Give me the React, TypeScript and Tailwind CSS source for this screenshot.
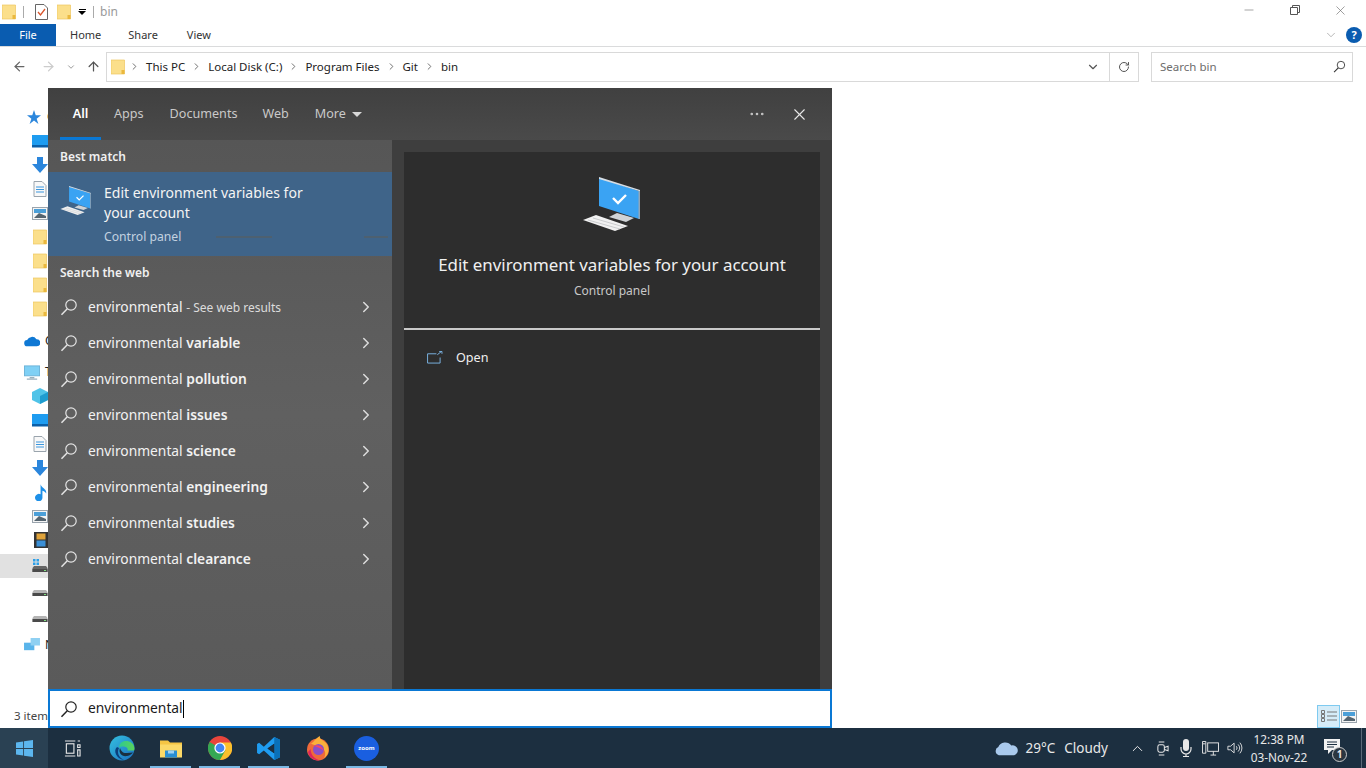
import React from 'react';
import { ChevronRight, ChevronDown, ChevronUp, ArrowLeft, ArrowRight, ArrowUp, RotateCw, X, Minus, Ellipsis } from 'lucide-react';

const FONT = "font-['Noto_Sans','Open_Sans',sans-serif]";

const SearchGlyph = ({ className }: { className?: string }) => (
  <svg viewBox="0 0 18 18" fill="none" stroke="currentColor" strokeWidth="1.2" className={className}>
    <circle cx="11" cy="7" r="5.2" />
    <path d="M7.3 10.8 L1.5 16.8" strokeWidth="1.5" />
  </svg>
);

const Folder = ({ className }: { className?: string }) => (
  <svg viewBox="0 0 14 16" className={className}>
    <path d="M0 1 H10 L13.5 1 V15 H0 Z" fill="#fbdf8b" stroke="#eec55f" strokeWidth="0.7" />
    <rect x="10.5" y="11" width="3" height="4" fill="#eab83e" />
  </svg>
);

const Desktop = ({ className }: { className?: string }) => (
  <svg viewBox="0 0 58 56" className={className}>
    <path d="M16 1 L56 14 L56 42 L16 29 Z" fill="#3aa3f3" />
    <path d="M16 0 L57 13 L57 16 L56 14 L16 2 Z" fill="#d6dde4" />
    <path d="M55.5 14 L57 14 V42 L55.5 42 Z" fill="#8fa5b8" />
    <path d="M30 21 L35 26 L43 18" fill="none" stroke="#fff" strokeWidth="2.4" />
    <path d="M26 40 L34 36 L51 41 L43 45 Z" fill="#cfd3d6" />
    <path d="M0 43 L13 38 L45 49 L32 54 Z" fill="#f1f1f1" />
    <path d="M5 43 L37 52 M10 41 L41 50" stroke="#b9bcbf" strokeWidth="0.7" />
  </svg>
);

// Windows logo on the taskbar
const StartLogo = () => (
  <svg viewBox="0 0 18 18" className="w-[17px] h-[17px]" fill="#5cb6ee">
    <path d="M0 2.6 L7.6 1.5 V8.5 H0 Z M8.5 1.4 L18 0 V8.5 H8.5 Z M0 9.5 H7.6 V16.5 L0 15.4 Z M8.5 9.5 H18 V18 L8.5 16.6 Z" />
  </svg>
);

const EdgeIcon = () => (
  <svg viewBox="0 0 26 26" className="w-[26px] h-[26px]">
    <defs>
      <linearGradient id="edgeA" x1="0" y1="0" x2="1" y2="1">
        <stop offset="0" stopColor="#35c1e0" />
        <stop offset="1" stopColor="#1a6fc0" />
      </linearGradient>
      <linearGradient id="edgeB" x1="0" y1="0" x2="1" y2="0">
        <stop offset="0" stopColor="#2fc98f" />
        <stop offset="1" stopColor="#5bd35a" />
      </linearGradient>
    </defs>
    <circle cx="13" cy="13" r="12.5" fill="url(#edgeA)" />
    <path d="M25.5 14 C25.5 8 20 5.5 16 6 C12 6.5 9.5 10 10.5 12.5 C12 10.5 20 11 18.5 15.5 L25 15.5 Z" fill="url(#edgeB)" />
    <path d="M8 12 C4 15 7 24 15 25 C9 22 8 17 10 13 Z" fill="#0c3f7d" />
    <path d="M11 13 C9 18 13 22 18 21 C21 20.4 23 19 24 17.5 L18 18 C14 18.5 12 16 11 13 Z" fill="#1a2f40" />
  </svg>
);

const FolderApp = () => (
  <svg viewBox="0 0 22 18" className="w-[22px] h-[19px]">
    <path d="M0 1 H8 L10 3 H22 V17 H0 Z" fill="#f5c544" />
    <rect x="0" y="5" width="22" height="13" fill="#fbd968" />
    <rect x="5" y="11" width="12" height="7" fill="#2a8fd4" />
    <rect x="8" y="11" width="6" height="3" fill="#9fd2f2" />
  </svg>
);

const ChromeIcon = () => (
  <svg viewBox="0 0 24 24" className="w-[24px] h-[24px]">
    <circle cx="12" cy="12" r="12" fill="#e8453c" />
    <path d="M12 12 L1.6 6 A12 12 0 0 0 12 24 L18 14 Z" fill="#34a853" />
    <path d="M12 6.5 H22.9 A12 12 0 0 1 12 24 L17.5 14 Z" fill="#fbc02d" />
    <circle cx="12" cy="12" r="5.6" fill="#fff" />
    <circle cx="12" cy="12" r="4.4" fill="#4285f4" />
  </svg>
);

const VsCodeIcon = () => (
  <svg viewBox="0 0 24 24" className="w-[25px] h-[25px]">
    <path d="M17.5 1 L23 3.5 V20.5 L17.5 23 L7.5 13.8 L3 17.5 L1 16.3 V7.7 L3 6.5 L7.5 10.2 Z M17.5 7.5 L11 12 L17.5 16.5 Z" fill="#1f9cf0" />
    <path d="M17.5 1 L23 3.5 V20.5 L17.5 23 Z" fill="#0a70b8" />
    <path d="M17.5 7.5 L11 12 L17.5 16.5 Z" fill="#1c2e3f" />
  </svg>
);

const FirefoxIcon = () => (
  <svg viewBox="0 0 24 26" className="w-[24px] h-[26px]">
    <circle cx="12" cy="14.5" r="11" fill="#ef6a3a" />
    <path d="M3 8 C6 11 8 4 14 1 C13 4 17 5 20 8 C24 13 23 20 18 23 C22 16 16 11 11 11 Z" fill="#fbb03b" />
    <circle cx="12.5" cy="14.5" r="5.5" fill="#8b4fc9" />
    <path d="M8 11 C11 9 17 11 17.5 16 C15 13 11 12 8 11 Z" fill="#f5436f" />
    <path d="M2 17 C3 23 9 26 14 25.5 C9 24 5 21 4.5 14 Z" fill="#e0245e" />
  </svg>
);

const ZoomIcon = () => (
  <div className={`w-[25px] h-[25px] rounded-full bg-[#1a5fe0] flex items-center justify-center text-[6px] font-bold text-white ${FONT}`}>zoom</div>
);

// label: only the first letter of each tree heading peeks out from under the search panel
const SidebarRow = ({ indent, label, selected, mt, children }: { indent: string; label?: string; selected?: boolean; mt?: string; children: React.ReactNode }) => (
  <div className={`h-6 flex items-center ${indent} ${mt ?? ''} ${selected ? 'bg-[#e1e1e1]' : ''}`}>
    <span className="w-4 h-4 flex items-center justify-center shrink-0">{children}</span>
    {label && <span className="ml-[5px] text-[12px] text-[#222] whitespace-nowrap">{label}</span>}
  </div>
);

const DocIcon = () => (
  <svg viewBox="0 0 14 16" className="w-[14px] h-[16px]">
    <path d="M1 .5 H9 L13 4.5 V15.5 H1 Z" fill="#f8f8f8" stroke="#9aa4ad" />
    <path d="M3 6 H11 M3 8.5 H11 M3 11 H11" stroke="#3a96dd" strokeWidth="1.1" />
  </svg>
);
const ImgIcon = () => (
  <svg viewBox="0 0 16 13" className="w-[16px] h-[13px]">
    <rect x=".5" y=".5" width="15" height="12" fill="#f4f4f4" stroke="#9aa4ad" />
    <rect x="2" y="2" width="12" height="4" fill="#4b9fd8" />
    <path d="M2 11 L7 6 L14 9 V11 Z" fill="#55646f" />
  </svg>
);
const DownIcon = () => (
  <svg viewBox="0 0 16 16" className="w-[16px] h-[16px]"><path d="M5 0 H11 V7 H16 L8 16 L0 7 H5 Z" fill="#2b86dc" /></svg>
);
const BlueScreen = () => (
  <svg viewBox="0 0 16 13" className="w-[16px] h-[13px]"><rect width="16" height="12" fill="#1e9cf0" /><rect y="10" width="16" height="2.5" fill="#0b5fa8" /></svg>
);
const Drive = ({ win }: { win?: boolean }) => (
  <svg viewBox="0 0 16 14" className="w-[16px] h-[14px]">
    {win && <path d="M1 0 H3.5 V2.5 H1 Z M4.5 0 H7 V2.5 H4.5 Z M1 3.5 H3.5 V6 H1 Z M4.5 3.5 H7 V6 H4.5 Z" fill="#2b9fe8" />}
    <path d="M2 7 H14 L15.5 9 V13 H.5 V9 Z" fill={win ? '#666' : '#b4b4b4'} />
    <rect x=".5" y="10" width="15" height="3" fill="#4a4a4a" />
    <rect x="12" y="11" width="2" height="1" fill="#7fe07f" />
  </svg>
);
const PcIcon = () => (
  <svg viewBox="0 0 17 15" className="w-[17px] h-[15px]">
    <rect x=".5" y=".5" width="16" height="10.5" fill="#7fd0f5" stroke="#6cb3d8" />
    <path d="M6 13 H11 M3 14.5 H14" stroke="#9ab0bd" strokeWidth="1.2" />
  </svg>
);

const suggestions = ['variable', 'pollution', 'issues', 'science', 'engineering', 'studies', 'clearance'];

const ResultRow = ({ children }: { children: React.ReactNode }) => (
  <div className="h-9 flex items-center pl-[12px] pr-[17px] text-[#f2f2f2]">
    <SearchGlyph className="w-[18px] h-[18px] text-[#e4e4e4]" />
    <span className="ml-[10px] flex-1 text-[13.8px] whitespace-nowrap">{children}</span>
    <ChevronRight className="w-[18px] h-[18px] text-[#dddddd]" strokeWidth={2} />
  </div>
);

const SearchPanel = () => (
  <div className="absolute left-[48px] top-[88px] w-[784px] h-[640px] flex flex-col bg-[#3e3e3e]">
    {/* tabs */}
    <div className="h-[52px] shrink-0 bg-gradient-to-b from-[#404040] to-[#4a4a4a] flex items-center pl-[12px] pr-[23px] text-[12.6px] text-[#c9c9c9] relative">
      <span className="font-semibold text-white w-[41px] text-center">All</span>
      <span className="ml-[13px]">Apps</span>
      <span className="ml-[26px]">Documents</span>
      <span className="ml-[25px]">Web</span>
      <span className="ml-[26px]">More</span>
      <span className="ml-[6px] w-0 h-0 border-x-[5px] border-x-transparent border-t-[5px] border-t-[#d8d8d8]" />
      <Ellipsis className="ml-auto w-[18px] h-[18px] text-[#c8c8c8]" strokeWidth={1.5} />
      <X className="ml-[24px] w-[19px] h-[19px] text-[#e8e8e8]" strokeWidth={1.4} />
      <div className="absolute left-[12px] bottom-0 w-[41px] h-[3px] bg-[#0a78d4]" />
    </div>
    <div className="flex-1 flex min-h-0">
      {/* left results */}
      <div className="w-[344px] shrink-0 bg-gradient-to-b from-[#565656] via-[#606060] to-[#5a5a5a] flex flex-col">
        <div className="h-[32px] flex items-center pl-[12px] pt-[1px] text-[12px] font-semibold text-[#f0f0f0]">Best match</div>
        <div className="h-[84px] bg-[#3f6489] flex relative">
          <Desktop className="w-[32px] h-[30px] ml-[12px] mt-[14px]" />
          <div className="ml-[12px] pt-[11px] text-[14px] leading-[20px] text-[#f4f4f4]">
            <div>Edit environment variables for</div>
            <div>your account</div>
            <div className="mt-[4px] text-[12.2px] text-[#c3d2e0]">Control panel</div>
          </div>
          <div className="absolute left-[168px] top-[64px] w-[56px] h-[2px] bg-[#4d6070]" />
          <div className="absolute left-[316px] top-[64px] w-[24px] h-[2px] bg-[#4d6070]" />
        </div>
        <div className="h-[33px] flex items-center pl-[12px] text-[12px] font-semibold text-[#f0f0f0]">Search the web</div>
        <ResultRow>
          environmental <span className="text-[12px] text-[#dcdcdc]">- See web results</span>
        </ResultRow>
        {suggestions.map((s) => (
          <ResultRow key={s}>
            environmental <span className="font-semibold">{s}</span>
          </ResultRow>
        ))}
      </div>
      {/* right preview */}
      <div className="flex-1 p-[12px] pb-0 min-w-0">
        <div className="h-full bg-[#2d2d2d] flex flex-col">
          <div className="h-[178px] shrink-0 flex flex-col items-center border-b-2 border-[#c9c9c9]">
            <Desktop className="w-[58px] h-[56px] mt-[25px]" />
            <div className="mt-[20px] text-[16.9px] leading-[24px] text-[#f0f0f0] whitespace-nowrap">Edit environment variables for your account</div>
            <div className="mt-[5px] text-[12px] text-[#c8c8c8]">Control panel</div>
          </div>
          <div className="flex items-center pl-[23px] mt-[19px] text-[12.6px] text-[#f0f0f0]">
            <svg viewBox="0 0 17 14" fill="none" stroke="#7db8e8" strokeWidth="1" className="w-[16px] h-[13px] -mt-[2px]">
              <path d="M10 3 H.5 V13 H14 V7" />
              <path d="M11 4 L15.5 .5 M13 .5 H16 V3" />
            </svg>
            <span className="ml-[13px]">Open</span>
          </div>
        </div>
      </div>
    </div>
    {/* search box */}
    <div className="h-[39px] shrink-0 bg-white border-2 border-[#0a78d4] flex items-center pl-[10px] text-[13.8px] text-[#1a1a1a]">
      <SearchGlyph className="w-[18px] h-[18px] text-[#222]" />
      <span className="ml-[10px]">environmental</span>
      <span className="w-px h-[18px] bg-black" />
    </div>
  </div>
);

const Taskbar = () => (
  <div className={`h-10 shrink-0 bg-[#1c2f40] flex items-center text-white ${FONT}`}>
    <div className="w-[48px] h-full bg-[#2a4153] flex items-center justify-center"><StartLogo /></div>
    <div className="w-[48px] h-full flex items-center justify-center">
      <svg viewBox="0 0 18 18" fill="none" stroke="#e6e6e6" strokeWidth="1.2" className="w-[17px] h-[17px]">
        <path d="M1 1 H12 M1 17 H12 M14.5 1 H17 M14.5 5 H17 V8 H14.5 Z M14.5 10.5 H17 V17 H14.5 Z" />
        <rect x="2.5" y="4" width="8" height="10" />
      </svg>
    </div>
    <div className="flex ml-[1px]">
      {[
        { key: 'edge', el: <EdgeIcon />, on: false },
        { key: 'folder', el: <FolderApp />, on: true },
        { key: 'chrome', el: <ChromeIcon />, on: true },
        { key: 'code', el: <VsCodeIcon />, on: true },
        { key: 'fox', el: <FirefoxIcon />, on: false },
        { key: 'zoom', el: <ZoomIcon />, on: true },
      ].map((a) => (
        <div key={a.key} className="w-[49px] h-10 flex items-center justify-center relative">
          {a.el}
          {a.on && <div className="absolute bottom-0 left-[4px] right-[4px] h-[2px] bg-[#7ab8e4]" />}
        </div>
      ))}
    </div>
    <div className="ml-auto flex items-center h-full text-[#e8e8e8]">
      <svg viewBox="0 0 26 16" className="w-[25px] h-[16px]">
        <path d="M5 15.5 A4.5 4.5 0 0 1 4.5 7 A7.5 7 0 0 1 18 5.5 A5 5 0 0 1 21 15.5 Z" fill="#a9c9ec" />
      </svg>
      <span className="ml-[7px] text-[13.5px]">29°C</span>
      <span className="ml-[9px] text-[13.5px]">Cloudy</span>
      <ChevronUp className="ml-[21px] w-[17px] h-[17px]" strokeWidth={1.4} />
      <svg viewBox="0 0 14 18" fill="none" stroke="#e8e8e8" strokeWidth="1.1" className="ml-[10px] w-[13px] h-[17px]">
        <rect x="2" y="5" width="7" height="8" rx="2" />
        <path d="M9 8 L13 6.5 V11.5 L9 10 M3 2 H9 M3 16 H9" />
      </svg>
      <svg viewBox="0 0 12 18" fill="#e8e8e8" className="ml-[11px] w-[12px] h-[18px]">
        <rect x="3" y="0" width="6" height="12" rx="3" />
        <path d="M1 8 V10 A5 5 0 0 0 11 10 V8 M6 15 V17 M3 17.5 H9" fill="none" stroke="#e8e8e8" strokeWidth="1.2" />
      </svg>
      <svg viewBox="0 0 18 16" fill="none" stroke="#e8e8e8" strokeWidth="1" className="ml-[10px] w-[17px] h-[15px]">
        <rect x="6" y="2" width="11.5" height="9" />
        <path d="M.5 .5 H4 V13 H.5 Z M1 3 H3.5 M9 15 H15 M12 11 V15" />
      </svg>
      <svg viewBox="0 0 18 14" fill="none" stroke="#e8e8e8" strokeWidth="1" className="ml-[8px] w-[16px] h-[14px]">
        <path d="M1 5 H4 L8 1.5 V12.5 L4 9 H1 Z M10.5 5 A3 3 0 0 1 10.5 9 M12.5 3 A6 6 0 0 1 12.5 11 M14.5 1 A9 9 0 0 1 14.5 13" />
      </svg>
      <div className="ml-[1px] w-[70px] text-center text-[11.8px] leading-[18px] -mt-[1px]">
        <div>12:38 PM</div>
        <div>03-Nov-22</div>
      </div>
      <div className="ml-[10px] w-[24px] h-full relative flex items-center">
        <svg viewBox="0 0 16 15" className="w-[16px] h-[15px] -mt-[4px]">
          <path d="M0 0 H16 V11 H8 L4 15 V11 H0 Z" fill="#f2f2f2" />
          <path d="M3 3 H13 M3 5.5 H13 M3 8 H10" stroke="#1c2f40" strokeWidth="1" />
        </svg>
        <span className="absolute left-[8px] top-[19px] w-[15px] h-[15px] rounded-full bg-[#2b3640] border border-[#ccc] text-[10px] font-bold flex items-center justify-center">1</span>
      </div>
      <div className="ml-[13px] w-px h-full bg-[#5a6a78]" />
      <div className="w-[4px]" />
    </div>
  </div>
);

export default function App() {
  return (
    <div className={`relative w-[1366px] h-[768px] overflow-hidden flex flex-col bg-white ${FONT}`}>
      {/* title bar */}
      <div className="h-[24px] shrink-0 flex items-center pl-[2px] text-[12px] text-[#9a9a9a]">
        <Folder className="w-[14px] h-[16px]" />
        <span className="ml-[7px] w-px h-[12px] bg-[#aaa]" />
        <svg viewBox="0 0 13 16" className="ml-[11px] w-[13px] h-[16px]">
          <path d="M.5 .5 H9 L12.5 4 V15.5 H.5 Z" fill="#fff" stroke="#666" />
          <path d="M3 8 L5.5 11 L10 5" fill="none" stroke="#d9542b" strokeWidth="1.3" />
        </svg>
        <Folder className="ml-[9px] w-[14px] h-[16px]" />
        <span className="ml-[7px] flex flex-col items-center">
          <span className="w-[7px] h-px bg-black mb-px" />
          <span className="w-0 h-0 border-x-[4px] border-x-transparent border-t-[4px] border-t-black" />
        </span>
        <span className="ml-[7px] w-px h-[12px] bg-[#aaa]" />
        <span className="ml-[6px]">bin</span>
        <div className="ml-auto flex items-center text-[#666] -mt-[4px]">
          <Minus className="w-[14px] h-[14px]" strokeWidth={1} />
          <svg viewBox="0 0 10 10" fill="none" stroke="#555" className="ml-[34px] w-[10px] h-[10px]">
            <path d="M.5 2.5 H7.5 V9.5 H.5 Z M2.5 2.5 V.5 H9.5 V7.5 H7.5" />
          </svg>
          <X className="ml-[33px] mr-[18px] w-[15px] h-[15px]" strokeWidth={1} />
        </div>
      </div>
      {/* ribbon tabs */}
      <div className="h-[23px] shrink-0 flex items-center border-b border-[#dadbdc] text-[11px] text-[#333]">
        <div className="w-[56px] h-full bg-[#0a5cb0] text-white flex items-center justify-center">File</div>
        <span className="ml-[14px]">Home</span>
        <span className="ml-[27px]">Share</span>
        <span className="ml-[29px]">View</span>
        <ChevronDown className="ml-auto w-[14px] h-[14px] text-[#999]" strokeWidth={1.2} />
        <span className="ml-[8px] mr-[4px] w-[16px] h-[16px] rounded-full bg-[#0a5cb0] text-white text-[11px] font-bold flex items-center justify-center">?</span>
      </div>
      {/* address row */}
      <div className="h-[39px] shrink-0 flex items-center pl-[12px] pr-[13px] text-[11.5px] text-[#222]">
        <ArrowLeft className="w-[15px] h-[15px] text-[#666]" />
        <ArrowRight className="ml-[14px] w-[15px] h-[15px] text-[#ccc]" />
        <ChevronDown className="ml-[10px] w-[10px] h-[10px] text-[#888]" />
        <ArrowUp className="ml-[10px] w-[15px] h-[15px] text-[#555]" />
        <div className="ml-[5px] h-[30px] w-[1033px] border border-[#d9d9d9] flex items-center pl-[4px]">
          <Folder className="w-[14px] h-[16px] -mr-[2px]" />
          {['This PC', 'Local Disk (C:)', 'Program Files', 'Git', 'bin'].map((p) => (
            <span key={p} className="flex items-center">
              <ChevronRight className="mx-[6px] w-[11px] h-[11px] text-[#666]" />
              <span>{p}</span>
            </span>
          ))}
          <ChevronDown className="ml-auto mr-[9px] w-[14px] h-[14px] text-[#555]" />
          <span className="w-[29px] h-full border-l border-[#d9d9d9] flex items-center justify-center">
            <RotateCw className="w-[12px] h-[12px] text-[#555]" />
          </span>
        </div>
        <div className="ml-[12px] h-[30px] flex-1 border border-[#d9d9d9] flex items-center pl-[8px] pr-[6px] text-[#6d6d6d]">
          Search bin
          <SearchGlyph className="ml-auto w-[13px] h-[13px] text-[#333]" />
        </div>
      </div>
      {/* explorer body */}
      <div className="flex-1 min-h-0 flex flex-col pt-[19px]">
        <div className="w-[48px] flex flex-col">
          <SidebarRow indent="pl-[26px]" label="Q">
            <svg viewBox="0 0 16 16" className="w-[14px] h-[14px]"><path d="M8 0 L10 6 H16 L11 10 L13 16 L8 12 L3 16 L5 10 L0 6 H6 Z" fill="#2b86dc" /></svg>
          </SidebarRow>
          <SidebarRow indent="pl-[32px]"><BlueScreen /></SidebarRow>
          <SidebarRow indent="pl-[32px]"><DownIcon /></SidebarRow>
          <SidebarRow indent="pl-[32px]"><DocIcon /></SidebarRow>
          <SidebarRow indent="pl-[32px]"><ImgIcon /></SidebarRow>
          {[0, 1, 2, 3].map((i) => (
            <SidebarRow key={i} indent="pl-[32px]"><Folder className="w-[14px] h-[16px]" /></SidebarRow>
          ))}
          <SidebarRow indent="pl-[24px]" label="O" mt="mt-[8px]">
            <svg viewBox="0 0 18 12" className="w-[17px] h-[12px]"><path d="M4 12 A3.5 3.5 0 0 1 3.5 5 A6 6 0 0 1 14 4 A4 4 0 0 1 14.5 12 Z" fill="#0f78d4" /></svg>
          </SidebarRow>
          <SidebarRow indent="pl-[24px]" label="T" mt="mt-[7px]"><PcIcon /></SidebarRow>
          <SidebarRow indent="pl-[32px]">
            <svg viewBox="0 0 16 16" className="w-[16px] h-[16px]"><path d="M8 0 L16 4 V12 L8 16 L0 12 V4 Z" fill="#4fc3e8" /><path d="M8 8 L16 4 V12 L8 16 Z" fill="#1f9ccf" /></svg>
          </SidebarRow>
          <SidebarRow indent="pl-[32px]"><BlueScreen /></SidebarRow>
          <SidebarRow indent="pl-[32px]"><DocIcon /></SidebarRow>
          <SidebarRow indent="pl-[32px]"><DownIcon /></SidebarRow>
          <SidebarRow indent="pl-[33px]">
            <svg viewBox="0 0 14 18" className="w-[13px] h-[17px]"><path d="M6 0 C7 4 13 5 12 10 C11 8 9 7 8 7 V14 A4 4 0 1 1 6 11 Z" fill="#1e90e8" /></svg>
          </SidebarRow>
          <SidebarRow indent="pl-[32px]"><ImgIcon /></SidebarRow>
          <SidebarRow indent="pl-[33px]">
            <svg viewBox="0 0 14 16" className="w-[14px] h-[16px]"><rect width="14" height="16" fill="#333" /><rect x="2.5" y="1.5" width="9" height="6" fill="#e0a33a" /><rect x="2.5" y="8.5" width="9" height="6" fill="#3a8fd6" /></svg>
          </SidebarRow>
          <SidebarRow indent="pl-[32px]" selected mt="mt-[2px]"><Drive win /></SidebarRow>
          <SidebarRow indent="pl-[32px]"><Drive /></SidebarRow>
          <SidebarRow indent="pl-[32px]" mt="mt-[2px]"><Drive /></SidebarRow>
          <SidebarRow indent="pl-[24px]" label="N" mt="mt-[5px]">
            <svg viewBox="0 0 17 16" className="w-[16px] h-[15px]"><rect y="5" width="11" height="8" fill="#5ab4ea" /><rect x="7" y="0" width="10" height="8" fill="#8fd0f2" /></svg>
          </SidebarRow>
        </div>
        {/* status bar */}
        <div className="mt-auto h-[24px] flex items-center pl-[14px] pr-[9px] text-[11.5px] text-[#444]">
          <span className="whitespace-nowrap">3 items</span>
          <div className="ml-auto w-[23px] h-[23px] bg-[#d5ecf8] border border-[#7ecaf0] flex items-center justify-center">
            <svg viewBox="0 0 16 12" fill="none" stroke="#777" className="w-[16px] h-[12px]">
              <path d="M.5 .5 H3.5 V3.5 H.5 Z M.5 4.5 H3.5 V7.5 H.5 Z M.5 8.5 H3.5 V11.5 H.5 Z M6 2 H16 M6 6 H16 M6 10 H16" />
            </svg>
          </div>
          <div className="ml-[1px]"><ImgIcon /></div>
        </div>
      </div>
      <Taskbar />
      <SearchPanel />
    </div>
  );
}
